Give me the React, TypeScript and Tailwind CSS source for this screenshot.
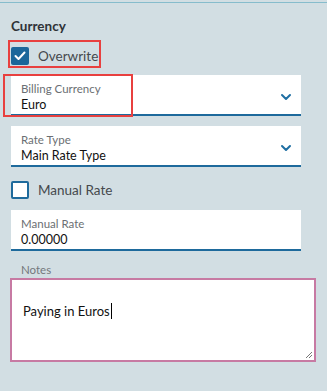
import React from "react";

const FONT = { fontFamily: "Lato, 'Noto Sans', sans-serif" };

function Chevron() {
  return (
    <svg width="12" height="8" viewBox="0 0 12 8" fill="none" stroke="#1f6fa3" strokeWidth="2" strokeLinecap="round" strokeLinejoin="round">
      <path d="M2 2l4 4 4-4" />
    </svg>
  );
}

function Field({ label, value, select }: { label: string; value: string; select?: boolean }) {
  return (
    <div className="flex h-[41px] w-[290px] items-center border-b-2 border-[#1e6a9c] bg-white pl-[10px] pr-[9px]">
      <div className="flex flex-1 flex-col pt-[4px]">
        <span className="text-[11.5px] leading-[15px] text-[#6b6f73]">{label}</span>
        <span className="text-[12.5px] leading-[17px] text-[#111]">{value}</span>
      </div>
      {select && (
        <div className="mt-[4px]">
          <Chevron />
        </div>
      )}
    </div>
  );
}

function Check({ checked, label }: { checked: boolean; label: string }) {
  return (
    <div className="flex h-[22px] items-center gap-[9px]">
      {checked ? (
        <div className="flex h-[18px] w-[18px] items-center justify-center rounded-[2px] bg-[#1b679a]">
          <svg width="12" height="10" viewBox="0 0 12 10" fill="none" stroke="#fff" strokeWidth="2" strokeLinecap="round" strokeLinejoin="round">
            <path d="M1.5 5l3 3 6-6.5" />
          </svg>
        </div>
      ) : (
        <div className="h-[18px] w-[18px] rounded-[2px] border-2 border-[#1e6a9c] bg-white" />
      )}
      <span className="text-[13.5px] text-[#45494d]">{label}</span>
    </div>
  );
}

export default function App() {
  return (
    <div className="relative h-[391px] w-[327px] overflow-hidden bg-[#d2dee3]" style={FONT}>
      <div className="mt-[2px] h-px w-full bg-[#86bccc]" />
      <div className="flex flex-col pl-[11px] pt-[14px]">
        <div className="text-[13.5px] font-bold leading-[18px] text-[#2f3337]">Currency</div>
        <div className="mt-[10px]">
          <Check checked label="Overwrite" />
        </div>
        <div className="mt-[8px]">
          <Field label="Billing Currency" value="Euro" select />
        </div>
        <div className="mt-[10px]">
          <Field label="Rate Type" value="Main Rate Type" select />
        </div>
        <div className="mt-[12px]">
          <Check checked={false} label="Manual Rate" />
        </div>
        <div className="mt-[9px]">
          <Field label="Manual Rate" value="0.00000" />
        </div>
        <div className="mt-[11px] pl-[10px] text-[11.5px] leading-[15px] text-[#74787c]">Notes</div>
        <div className="relative ml-[-1px] mt-[1px] h-[84px] w-[306px] border-2 border-[#c77aa3] bg-white pl-[11px] pt-[18px]">
          <span className="text-[13px] text-[#111]">Paying in Euros</span>
          <span className="ml-[1px] inline-block h-[16px] w-px translate-y-[3px] bg-black" />
          <svg className="absolute bottom-[1px] right-[1px]" width="8" height="8" viewBox="0 0 8 8" stroke="#777" strokeWidth="1">
            <path d="M1 7L7 1M4 7L7 4" />
          </svg>
        </div>
      </div>
      <div className="pointer-events-none absolute left-[8px] top-[40px] h-[28px] w-[93px] border-2 border-[#e8403f]" />
      <div className="pointer-events-none absolute left-[3px] top-[74px] h-[43px] w-[130px] border-2 border-[#e8403f]" />
    </div>
  );
}
